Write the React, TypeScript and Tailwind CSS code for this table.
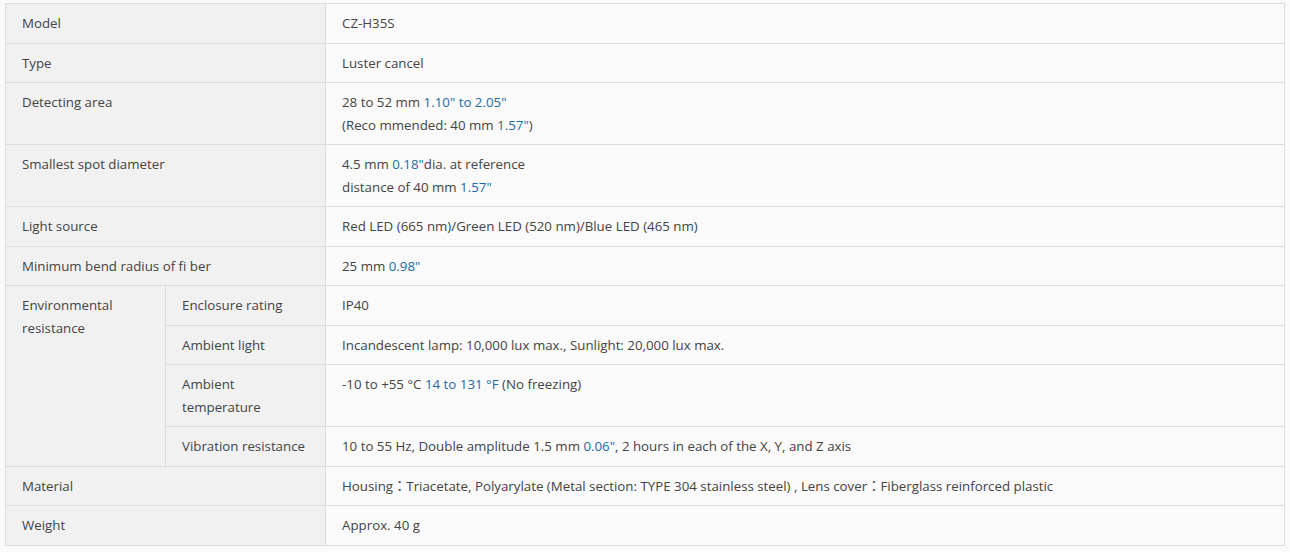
import React from "react";

const B = ({ children }: { children: React.ReactNode }) => (
  <span className="text-[#1f6aa5]">{children}</span>
);

const th = "border border-[#dcdcdc] bg-[#f1f1f1] px-4 py-2 align-top text-left font-normal";
const td = "border border-[#dcdcdc] bg-[#fafafa] px-4 py-2 align-top text-left";

export default function App() {
  return (
    <div
      className="min-h-[552px] w-[1290px] bg-[#fafafa] pt-[3px] pl-[5px] text-[13.3px] leading-[22.5px] text-[#444444]"
      style={{ fontFamily: '"Open Sans", "Noto Sans CJK JP", sans-serif' }}
    >
      <table className="w-[1280px] table-fixed border-collapse">
        <colgroup>
          <col className="w-[160px]" />
          <col className="w-[160px]" />
          <col />
        </colgroup>
        <tbody>
          <tr>
            <th colSpan={2} className={th}>Model</th>
            <td className={td}>CZ-H35S</td>
          </tr>
          <tr>
            <th colSpan={2} className={th}>Type</th>
            <td className={td}>Luster cancel</td>
          </tr>
          <tr>
            <th colSpan={2} className={th}>Detecting area</th>
            <td className={td}>
              28 to 52 mm <B>1.10" to 2.05"</B>
              <br />
              (Reco mmended: 40 mm <B>1.57"</B>)
            </td>
          </tr>
          <tr>
            <th colSpan={2} className={th}>Smallest spot diameter</th>
            <td className={td}>
              4.5 mm <B>0.18"</B>dia. at reference
              <br />
              distance of 40 mm <B>1.57"</B>
            </td>
          </tr>
          <tr>
            <th colSpan={2} className={th}>Light source</th>
            <td className={td}>Red LED (665 nm)/Green LED (520 nm)/Blue LED (465 nm)</td>
          </tr>
          <tr>
            <th colSpan={2} className={th}>Minimum bend radius of fi ber</th>
            <td className={td}>
              25 mm <B>0.98"</B>
            </td>
          </tr>
          <tr>
            <th rowSpan={4} className={th}>
              Environmental
              <br />
              resistance
            </th>
            <th className={th}>Enclosure rating</th>
            <td className={td}>IP40</td>
          </tr>
          <tr>
            <th className={th}>Ambient light</th>
            <td className={td}>Incandescent lamp: 10,000 lux max., Sunlight: 20,000 lux max.</td>
          </tr>
          <tr>
            <th className={th}>
              Ambient
              <br />
              temperature
            </th>
            <td className={td}>
              -10 to +55 °C <B>14 to 131 °F</B> (No freezing)
            </td>
          </tr>
          <tr>
            <th className={th}>Vibration resistance</th>
            <td className={td}>
              10 to 55 Hz, Double amplitude 1.5 mm <B>0.06"</B>, 2 hours in each of the X, Y, and Z axis
            </td>
          </tr>
          <tr>
            <th colSpan={2} className={th}>Material</th>
            <td className={td}>
              Housing：Triacetate, Polyarylate (Metal section: TYPE 304 stainless steel) , Lens cover：Fiberglass reinforced plastic
            </td>
          </tr>
          <tr>
            <th colSpan={2} className={th}>Weight</th>
            <td className={td}>Approx. 40 g</td>
          </tr>
        </tbody>
      </table>
    </div>
  );
}
